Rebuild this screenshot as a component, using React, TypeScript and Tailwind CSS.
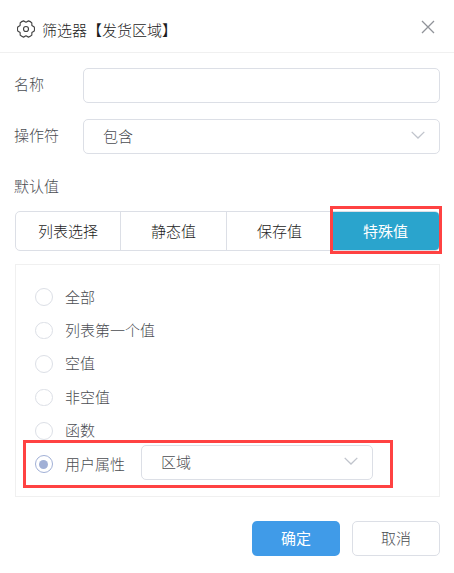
import clsx from "clsx";

const tabs = ["列表选择", "静态值", "保存值", "特殊值"];
const options = ["全部", "列表第一个值", "空值", "非空值", "函数", "用户属性"];

function Gear() {
    return (
        <svg className="relative -top-px h-[18px] w-[18px]" viewBox="0 0 18 18" fill="none" stroke="#444" strokeWidth="1.15" strokeLinejoin="round">
            <path d="M17.28 10.91 L14.89 12.4 L14.8 15.22 Q13.4 16.7 11.49 17.13 L9 15.8 L6.51 17.13 Q4.6 16.7 3.2 15.22 L3.11 12.4 L0.72 10.91 Q0.2 9 0.72 7.09 L3.11 5.6 L3.2 2.78 Q4.6 1.3 6.51 0.87 L9 2.2 L11.49 0.87 Q13.4 1.3 14.8 2.78 L14.89 5.6 L17.28 7.09 Q17.8 9 17.28 10.91 Z" />
            <circle cx="9" cy="9" r="2.5" />
        </svg>
    );
}

function Chevron() {
    return (
        <svg className="mb-[3px] h-2 w-[14px]" viewBox="0 0 14 8" fill="none" stroke="#c0c4cc" strokeWidth="1.3">
            <path d="M0.7 0.9 L7 7 L13.3 0.9" />
        </svg>
    );
}

function Select({ value, className }: { value: string; className?: string }) {
    return (
        <div
            className={clsx(
                "flex h-[35px] items-center justify-between rounded-[5px] border border-[#dcdfe6] bg-white pr-[14px] pl-[19px]",
                className,
            )}
        >
            <span className="mb-px">{value}</span>
            <Chevron />
        </div>
    );
}

function Radio({ checked }: { checked: boolean }) {
    return (
        <span
            className={clsx(
                "mt-px flex size-[17.5px] shrink-0 items-center justify-center rounded-full border",
                checked ? "border-[#a1b0d6]" : "border-[#dcdfe6]",
            )}
        >
            {checked && <span className="size-[9px] rounded-full bg-[#a1b0d6]" />}
        </span>
    );
}

export default function App() {
    return (
        <div className="h-[573px] w-[454px] overflow-hidden bg-white font-['Noto_Sans_CJK_SC',sans-serif] text-[15px] leading-5 font-light text-[#4b4d52]">
            {/* Header */}
            <header className="flex h-[53px] items-center border-b border-[#f0f0f0] pt-2 pr-[19px] pl-[17px] text-[#1c1c1c]">
                <Gear />
                <h1 className="ml-[7px]">筛选器【发货区域】</h1>
                <svg className="relative -top-[3px] ml-auto size-[14px]" viewBox="0 0 14 14" fill="none" stroke="#909399" strokeWidth="1.3">
                    <path d="M1 1 L13 13 M13 1 L1 13" />
                </svg>
            </header>

            <main className="pt-[15px] pr-[14px] pl-[15px]">
                <div className="flex h-[35px] items-center">
                    <label className="-ml-px w-[69px] shrink-0 pb-1">名称</label>
                    <input className="h-[35px] w-full rounded-[5px] border border-[#dcdfe6] px-4 outline-none" />
                </div>

                <div className="mt-4 flex h-[35px] items-center">
                    <label className="-ml-px w-[69px] shrink-0 pb-1">操作符</label>
                    <Select value="包含" className="flex-1" />
                </div>

                <div className="mt-[22px] -ml-px">默认值</div>

                {/* Value type tabs */}
                <div className="relative mt-[15px] grid h-10 grid-cols-[105px_106px_106px_1fr] rounded-[5px] border border-[#dcdfe6] text-[#1c1c1c]">
                    {tabs.map((tab, i) => (
                        <button
                            key={tab}
                            className={clsx(
                                i < 2 && "border-r border-[#dcdfe6]",
                                i === 2 && "pr-px",
                                i === 3 && "rounded-r-[4px] bg-[#2aa4cd] pr-px font-normal text-white",
                            )}
                        >
                            {tab}
                        </button>
                    ))}
                    <div className="pointer-events-none absolute -top-[6px] -right-[3px] h-12 w-28 border-3 border-[#ff4242]" />
                </div>

                {/* Special value options */}
                <div className="relative mt-[13px] h-[233px] border border-[#f0f0f0] pt-[15px] pl-[19px]">
                    {options.map((option) => (
                        <div key={option} className="flex h-[33.4px] items-center">
                            <Radio checked={option === "用户属性"} />
                            <span className="ml-[12.5px]">{option}</span>
                            {option === "用户属性" && <Select value="区域" className="mb-[2px] ml-4 w-[232px]" />}
                        </div>
                    ))}
                    <div className="pointer-events-none absolute top-[175px] left-[7px] h-12 w-[370px] border-3 border-[#ff4242]" />
                </div>

                <footer className="mt-6 flex justify-end gap-3">
                    <button className="h-[35px] w-[88px] rounded-[5px] bg-[#409be8] pb-[2px] font-normal text-white">确定</button>
                    <button className="h-[35px] w-[88px] rounded-[5px] border border-[#dcdfe6] pb-[2px]">取消</button>
                </footer>
            </main>
        </div>
    );
}
